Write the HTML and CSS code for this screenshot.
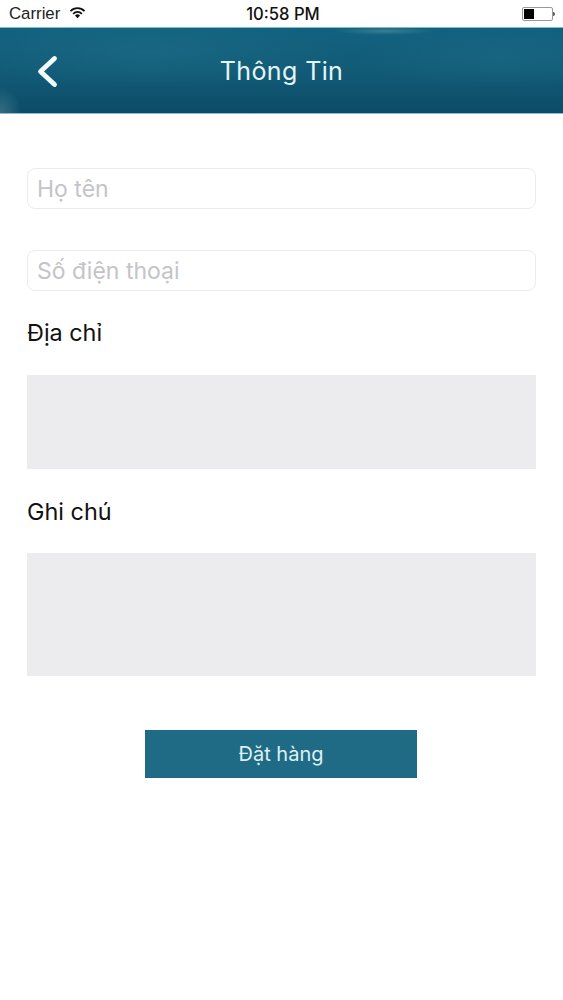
FILE: index.html
```html
<!DOCTYPE html>
<html lang="vi">
<head>
<meta charset="utf-8">
<title>Thông Tin</title>
<link rel="stylesheet" href="styles.css">
</head>
<body>
<div class="status">
  <div class="status-left">
    <span>Carrier</span>
    <svg class="wifi" viewBox="0 0 16 12" width="17" height="13"><path d="M8 11.5 5.6 8.9a3.4 3.4 0 0 1 4.8 0Z" fill="#111"/><path d="M3.9 7.2a5.8 5.8 0 0 1 8.2 0" fill="none" stroke="#111" stroke-width="1.7"/><path d="M1.4 4.6a9.3 9.3 0 0 1 13.2 0" fill="none" stroke="#111" stroke-width="1.7"/></svg>
  </div>
  <div class="status-time">10:58 PM</div>
  <div class="battery"><div class="battery-body"><div class="battery-level"></div></div><div class="battery-tip"></div></div>
</div>
<header class="nav">
  <svg class="back" viewBox="0 0 24 34" width="24" height="34"><path d="M19.5 3.5 5.5 16.5l14 13" fill="none" stroke="#f4fbfc" stroke-width="4.8" stroke-linecap="round" stroke-linejoin="round"/></svg>
  <h1 class="title">Thông Tin</h1>
</header>
<main class="form">
  <div class="field field-first">Họ tên</div>
  <div class="field field-second">Số điện thoại</div>
  <div class="label label-address">Địa chỉ</div>
  <div class="area area-address"></div>
  <div class="label label-note">Ghi chú</div>
  <div class="area area-note"></div>
  <button class="submit">Đặt hàng</button>
</main>
</body>
</html>
```
FILE: styles.css
```css
* { box-sizing: border-box; }
html, body { margin: 0; padding: 0; }
body {
  width: 563px;
  height: 1000px;
  background: #fff;
  font-family: "Inter", "Liberation Sans", sans-serif;
  overflow: hidden;
}
.status {
  height: 27px;
  display: flex;
  align-items: center;
  justify-content: space-between;
  padding: 0 8px 0 9px;
  position: relative;
  color: #222;
}
.status-left {
  display: flex;
  align-items: center;
  gap: 9px;
  font: 400 16.8px "Liberation Sans", sans-serif;
}
.wifi { margin-top: -3px; }
.status-time {
  position: absolute;
  left: 3px;
  right: 0;
  text-align: center;
  font: 500 16.6px "Inter", sans-serif;
  color: #111;
}
.battery { display: flex; align-items: center; }
.battery-body {
  width: 31px;
  height: 14px;
  border: 1px solid #999;
  border-radius: 2px;
  padding: 1px;
}
.battery-level { width: 10px; height: 100%; background: #000; }
.battery-tip { width: 2px; height: 4px; background: #555; border-radius: 0 2px 2px 0; }
.nav {
  height: 87px;
  display: flex;
  align-items: center;
  justify-content: center;
  position: relative;
  border-top: 1px solid #7fbccd;
  border-bottom: 1px solid #8cbfce;
  background:
    radial-gradient(ellipse 22px 26px at 0 100%, rgba(150,190,195,.3), transparent),
    radial-gradient(ellipse 50px 4px at 385px 3px, rgba(120,165,180,.4), transparent),
    radial-gradient(ellipse 200px 35px at 150px 25px, rgba(35,115,140,.4), transparent),
    radial-gradient(ellipse 140px 30px at 500px 30px, rgba(35,115,140,.35), transparent),
    linear-gradient(180deg, #12627f 0%, #115a76 55%, #0c4b67 100%);
}
.back { position: absolute; left: 35px; top: 27px; }
.title {
  margin: 0 0 -1px;
  font-size: 25px;
  font-weight: 400;
  color: #e6f5f8;
  letter-spacing: 0.4px;
}
.form { padding: 0 27px; display: flex; flex-direction: column; }
.field {
  height: 41px;
  border: 1px solid #ececef;
  border-radius: 8px;
  padding: 0 0 0 9px;
  display: flex;
  align-items: center;
  font-size: 23px;
  color: #c4c4c8;
}
.field-first { margin-top: 54px; }
.field-second { margin-top: 41px; }
.label { font-size: 23.4px; line-height: 30px; color: #111; }
.label-address { margin-top: 27px; }
.label-note { margin-top: 28px; }
.area { background: #ecebee; }
.area-address { margin-top: 27px; height: 94px; }
.area-note { margin-top: 26px; height: 123px; }
.submit {
  align-self: center;
  margin: 54px 1px 0 0;
  width: 272px;
  height: 48px;
  background: #1f6b85;
  border: 0;
  border-radius: 0;
  color: #dff0f4;
  font: 400 20px "Inter", sans-serif;
}
```
